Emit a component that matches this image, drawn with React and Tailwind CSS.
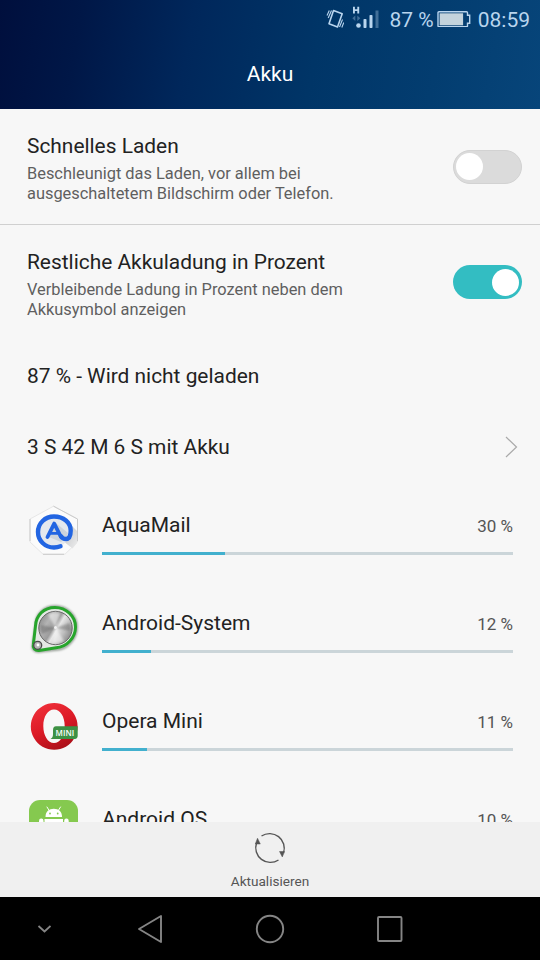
import { useState } from 'react';

const AquaMailIcon = () => (
  <svg viewBox="0 0 50 50" className="h-[50px] w-[50px]">
    <defs>
      <linearGradient id="aquaShade" x1="0" y1="0" x2="1" y2="1">
        <stop offset="0.3" stopColor="#c9cbce" />
        <stop offset="1" stopColor="#ececec" />
      </linearGradient>
    </defs>
    <path d="M24.500 1.200 48.500 14v23L36 49.200H14L1 37V14z" fill="#fbfbfb" stroke="#e6e6e6" strokeWidth="1" strokeLinejoin="round" />
    <path d="M38 16 48 26v12L43.500 43.500 34 36z" fill="url(#aquaShade)" />
    <circle cx="25.200" cy="26.800" r="15.500" fill="#e4e8ee" />
    <path d="m27 18 12 10-2 5-5 4-12-5z" fill="#cdd4dc" />
    <path d="M24.500 1.200 48.500 14M48.500 14v22M14 49.300h21M1 14v22" stroke="#c6c6c6" strokeWidth="0.900" fill="none" />
    <g fill="none" stroke="#2265e2" strokeLinecap="round" strokeLinejoin="round">
      <path d="M31.500 41.300c-2.200.9-4.200 1.200-6.500 1.200-9 0-16-6.800-16-15.500s7-15.500 16-15.500c9.500 0 16.700 6 16.700 14 0 5-1.700 8.500-5 8.500-2 0-3.400-.9-4.700-2.800" strokeWidth="4.400" />
      <path d="M18.500 32 25.200 18.600 32 32" strokeWidth="3.800" />
      <path d="M21.500 28.300h7.500" strokeWidth="2.800" />
    </g>
  </svg>
);

const SystemIcon = () => (
  <svg viewBox="0 0 50 50" className="h-[50px] w-[50px] overflow-visible">
    <defs>
      <linearGradient id="disc" x1="0" y1="0.2" x2="1" y2="0.8">
        <stop offset="0" stopColor="#8a8a8a" />
        <stop offset="0.25" stopColor="#b4b4b4" />
        <stop offset="0.45" stopColor="#9c9c9c" />
        <stop offset="0.55" stopColor="#e6e6e6" />
        <stop offset="0.75" stopColor="#bdbdbd" />
        <stop offset="1" stopColor="#7a7a7a" />
      </linearGradient>
      <filter id="soft" x="-20%" y="-20%" width="140%" height="140%">
        <feGaussianBlur stdDeviation="0.9" />
      </filter>
      <filter id="sheen">
        <feGaussianBlur stdDeviation="1.2" />
      </filter>
    </defs>
    <path d="M7 22C7 11 15 3.500 26.500 3.500S47.500 12 47.500 24 38 46.500 27 46.500L9 48.500c-4 0-6-3-5-6z" fill="none" stroke="#8c958c" strokeWidth="2.400" filter="url(#soft)" />
    <path d="M6.500 23C7 12 15 4.500 26 4.500S46.500 13 46.500 24 37.500 44.300 27 44.800L10 47.500c-4 .3-6.500-2.500-5.700-5.500z" fill="#e4e8e4" stroke="#27a52c" strokeWidth="3" />
    <circle cx="26.500" cy="25" r="16.700" fill="url(#disc)" stroke="#666" strokeWidth="1" />
    <g filter="url(#sheen)">
      <path d="M26.500 25 19 11.500a16 16 0 0 1 12-1.300zM26.500 25l8.500 12.800a16 16 0 0 1-12 2z" fill="#fff" opacity="0.500" />
      <path d="M26.500 25 12 22a16 16 0 0 0 .5 9zM26.500 25l14.200-5a16 16 0 0 1 .6 8z" fill="#555" opacity="0.400" />
    </g>
    <circle cx="26.500" cy="24.500" r="1.500" fill="#f1f1f1" />
    <circle cx="8.700" cy="42.300" r="4" fill="#b5b5b5" stroke="#4a4a4a" strokeWidth="1.300" />
    <circle cx="9" cy="42" r="1.400" fill="#fff" />
  </svg>
);

const OperaIcon = () => (
  <svg viewBox="0 0 50 50" className="h-[50px] w-[50px]">
    <defs>
      <linearGradient id="opera" x1="0.200" y1="0" x2="0.700" y2="1">
        <stop offset="0" stopColor="#f0303a" />
        <stop offset="0.500" stopColor="#dc1a26" />
        <stop offset="1" stopColor="#a80f18" />
      </linearGradient>
    </defs>
    <path fillRule="evenodd" d="M25.200 2a23.400 23.400 0 1 0 .01 0zM25 8.500c6.200 0 10.700 7 10.700 16.500s-4.500 17-10.700 17-10.700-7.500-10.700-17S18.800 8.500 25 8.500z" fill="url(#opera)" />
    <path d="M27 25.300h21.700v9.400c0 2-1 3.200-3 3.200H21.500c2-1 2.500-3 2.500-5v-3.700c0-2.500 1-3.900 3-3.900z" fill="#3d9144" />
    <text x="26.600" y="35" textLength="18.500" lengthAdjust="spacingAndGlyphs" fill="#fff" fontSize="9" fontWeight="600" fontFamily="Open Sans, sans-serif">MINI</text>
  </svg>
);

const AndroidIcon = () => (
  <svg viewBox="0 0 50 50" className="h-[50px] w-[50px]">
    <rect x="0" y="1" width="49" height="49" rx="11" fill="#85c94f" />
    <path d="M16.500 18c0-5.500 3.500-8.200 8.300-8.200s8.200 2.700 8.200 8.200z" fill="#fff" />
    <path d="m18 8 2.500 4M31.500 8 29 12" stroke="#fff" strokeWidth="1" strokeLinecap="round" />
    <circle cx="21" cy="14.500" r="0.900" fill="#85c94f" />
    <circle cx="28.700" cy="14.500" r="0.900" fill="#85c94f" />
    <path d="M15.500 20h18.500v17H15.500z" fill="#fff" />
    <rect x="10" y="19.500" width="4.500" height="14" rx="2.200" fill="#fff" />
    <rect x="35.200" y="19.500" width="4.500" height="14" rx="2.200" fill="#fff" />
  </svg>
);

const apps = [
  { name: 'AquaMail', percent: 30, icon: <AquaMailIcon /> },
  { name: 'Android-System', percent: 12, icon: <SystemIcon /> },
  { name: 'Opera Mini', percent: 11, icon: <OperaIcon /> },
  { name: 'Android OS', percent: 10, icon: <AndroidIcon /> },
];

function StatusBar() {
  return (
    <div className="flex h-[38px] items-center justify-end pr-[10px] text-[21px] leading-none text-[#b9d5ee]">
      {/* vibrate */}
      <svg viewBox="0 0 18 20" className="mr-px mb-px h-5 w-[18px]" fill="none" stroke="currentColor">
        <path d="m7.500 1.500 8.700 3.300L11.500 18 3 14.800z" strokeWidth="1.600" strokeLinejoin="round" />
        <path d="M1 6.500 3.300 1.500M2.200 9 5.500 1.500M13.500 18l3-7.500M15.800 18.500l2-5" strokeWidth="1.100" />
      </svg>
      {/* signal with HSPA marker */}
      <svg viewBox="0 0 28 24" className="mr-px mb-[3px] ml-[7px] h-6 w-[28px]" fill="currentColor">
        <path d="M1 .8h1.900v2.500h2.400V.8h1.900v6.600H5.300V5H2.900v2.400H1z" />
        <path d="m3.300 9.500-3 2.800 3 2.800zM5.300 9.500l3 2.800-3 2.800z" opacity="0.350" />
        <circle cx="6.500" cy="19.500" r="2.300" />
        <rect x="11.500" y="13" width="3" height="9" rx="0.800" />
        <rect x="17.500" y="9" width="3" height="13" rx="0.800" />
        <rect x="23.500" y="4.500" width="3" height="17.500" opacity="0.350" />
      </svg>
      <span className="ml-[9px] mt-[2px]">87 %</span>
      <svg viewBox="0 0 34 16" className="ml-[3px] h-4 w-[34px]">
        <path d="M2 .8h27.500q1 0 1 1v2.500h2.200v8h-2.200v2.500q0 1-1 1H2q-1 0-1-1v-13q0-1 1-1z" fill="none" stroke="currentColor" strokeWidth="1.400" />
        <rect x="2.600" y="2.300" width="23.500" height="12" fill="#c3d3dc" />
      </svg>
      <span className="ml-[7px] mt-[2px]">08:59</span>
    </div>
  );
}

function Toggle({ on, onClick }) {
  return (
    <button
      onClick={onClick}
      className={`flex h-[34px] w-[69px] items-center rounded-full ${
        on ? 'mb-px justify-end bg-[#33bdc2] px-[3px]' : 'justify-start border border-[#d2d2d2] bg-[#dbdbdb] px-[2px]'
      }`}
    >
      <span className="h-[27px] w-[27px] rounded-full bg-white" />
    </button>
  );
}

function SettingRow({ title, lines, on, onClick }) {
  return (
    <div className="flex h-[115px] items-center justify-between pl-[27px] pr-[18px]">
      <div className="pt-[3px] text-[#5f5f5f]">
        <h2 className="mb-[5px] text-[20.900px] leading-[26px] text-[#222]">{title}</h2>
        {lines.map((line) => (
          <p key={line} className="whitespace-nowrap text-[16.400px] leading-[20px]">{line}</p>
        ))}
      </div>
      <Toggle on={on} onClick={onClick} />
    </div>
  );
}

function AppRow({ app }) {
  return (
    <div className="flex h-[98px] pl-[29px] pr-[27px] pt-[23px]">
      <div className="h-[50px] w-[50px] shrink-0">{app.icon}</div>
      <div className="ml-[23px] flex-1 pt-[7px]">
        <div className="flex h-[28px] items-center justify-between">
          <span className="text-[21px] text-[#222]">{app.name}</span>
          <span className="pt-[2px] text-[17px] text-[#555]">{app.percent} %</span>
        </div>
        <div className="mt-[12px] h-[3px] bg-[#cbd5d9]">
          <div className="h-full bg-[#42b0ce]" style={{ width: `${app.percent}%` }} />
        </div>
      </div>
    </div>
  );
}

export default function App() {
  const [fastCharge, setFastCharge] = useState(false);
  const [showPercent, setShowPercent] = useState(true);

  return (
    <div className="flex h-[960px] w-[540px] flex-col overflow-hidden bg-[#f7f7f7] font-[Roboto,sans-serif]">
      <header className="h-[109px] shrink-0 bg-[linear-gradient(100deg,#000f3d_0%,#001747_15%,#00275b_35%,#003567_58%,#033d70_80%,#07457a_100%)]">
        <StatusBar />
        <h1 className="mt-[20px] text-center text-[21px] leading-[32px] text-white">Akku</h1>
      </header>

      <main className="min-h-0 flex-1 overflow-hidden">
        <SettingRow
          title="Schnelles Laden"
          lines={['Beschleunigt das Laden, vor allem bei', 'ausgeschaltetem Bildschirm oder Telefon.']}
          on={fastCharge}
          onClick={() => setFastCharge(!fastCharge)}
        />
        <div className="h-px bg-[#d0d0d0]" />
        <SettingRow
          title="Restliche Akkuladung in Prozent"
          lines={['Verbleibende Ladung in Prozent neben dem', 'Akkusymbol anzeigen']}
          on={showPercent}
          onClick={() => setShowPercent(!showPercent)}
        />
        <div className="flex h-[71px] items-center pl-[27px] pt-[3px] text-[20.900px] text-[#222]">87 % - Wird nicht geladen</div>
        <div className="flex h-[71px] items-center justify-between pl-[27px] pr-[22px] text-[20.900px] text-[#222]">
          <span className="pt-[3px]">3 S 42 M 6 S mit Akku</span>
          <svg viewBox="0 0 13 22" className="h-[22px] w-[13px]" fill="none" stroke="#aaa" strokeWidth="1.200">
            <path d="m1 1 10.500 10L1 21" />
          </svg>
        </div>
        {apps.map((app) => (
          <AppRow key={app.name} app={app} />
        ))}
      </main>

      <footer className="flex h-[75px] shrink-0 flex-col items-center bg-[#f0f0f0] pt-[9px] text-[#555]">
        <svg viewBox="0 0 34 34" className="h-[34px] w-[34px]" fill="none" stroke="currentColor" strokeWidth="1.400">
          <path d="M8.500 5A14.700 14.700 0 0 1 30.500 22M25.500 29A14.700 14.700 0 0 1 3.500 12" />
          <path d="M4.500 7.200 2.300 13h5zM26.500 20.500h5L29.300 26z" fill="currentColor" strokeWidth="0.500" />
        </svg>
        <span className="mt-[7px] text-[13.600px] leading-[18px]">Aktualisieren</span>
      </footer>

      <nav className="flex h-[63px] shrink-0 items-center bg-black pl-[37px] text-[#858585]">
        <svg viewBox="0 0 14 8" className="h-2 w-[14px]" fill="none" stroke="currentColor" strokeWidth="1.800">
          <path d="m1.500 1 6 5.500 6-5.500" />
        </svg>
        <svg viewBox="0 0 26 30" className="ml-[86px] h-[30px] w-[26px]" fill="none" stroke="currentColor" strokeWidth="1.900" strokeLinejoin="round">
          <path d="M24 2v26L2 15z" />
        </svg>
        <svg viewBox="0 0 30 30" className="ml-[92px] h-[30px] w-[30px]" fill="none" stroke="currentColor" strokeWidth="1.900">
          <circle cx="15" cy="15" r="13.200" />
        </svg>
        <svg viewBox="0 0 28 28" className="ml-[91px] h-7 w-7" fill="none" stroke="currentColor" strokeWidth="1.900">
          <rect x="2" y="2" width="23.500" height="24" rx="1" />
        </svg>
      </nav>
    </div>
  );
}
